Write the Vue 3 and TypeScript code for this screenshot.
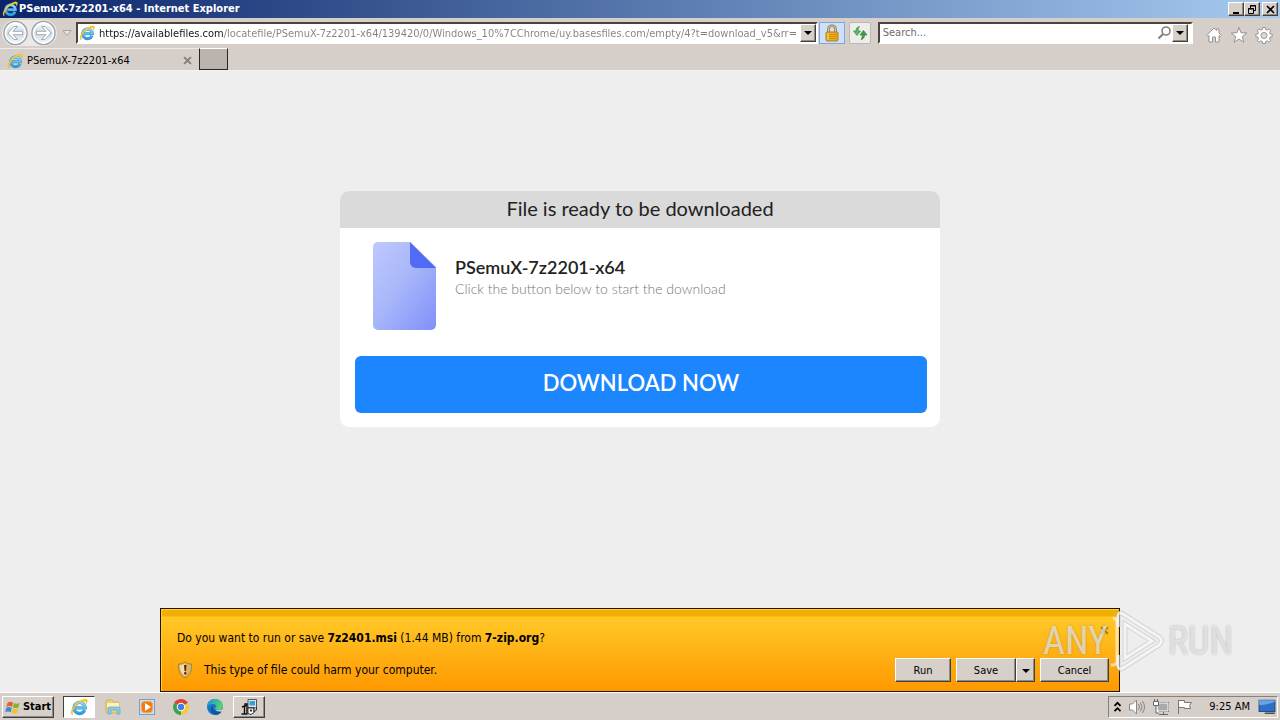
<script setup lang="ts">
import { ref } from 'vue'

const address = ref('https://availablefiles.com/locatefile/PSemuX-7z2201-x64/139420/0/Windows_10%7CChrome/uy.basesfiles.com/empty/4?t=download_v5&rr=1079')
const search = ref('')
const fileName = 'PSemuX-7z2201-x64'
</script>

<template>
  <svg class="defs" aria-hidden="true">
    <defs>
      <linearGradient id="ie-blue" x1="0" y1="0" x2="0" y2="1">
        <stop offset="0" stop-color="#8fdcfa" /><stop offset="1" stop-color="#2f9be0" />
      </linearGradient>
      <linearGradient id="nav-fill" x1="0" y1="0" x2="0" y2="1">
        <stop offset="0" stop-color="#fff" /><stop offset="0.5" stop-color="#cdd9e2" /><stop offset="1" stop-color="#f4fbff" />
      </linearGradient>
      <linearGradient id="file-fill" x1="0" y1="0" x2="1" y2="1">
        <stop offset="0" stop-color="#bfc9ff" /><stop offset="0.45" stop-color="#a9b7fa" /><stop offset="1" stop-color="#8090f8" />
      </linearGradient>
      <linearGradient id="edge-fill" x1="0" y1="0" x2="1" y2="0.4">
        <stop offset="0" stop-color="#1a8fe0" /><stop offset="1" stop-color="#58d66c" />
      </linearGradient>
      <symbol id="ie" viewBox="0 0 16 16">
        <path d="M13 10.800A4.900 4.900 0 1 1 13.400 8.700H5.500" fill="none" stroke="#3a8cc8" stroke-width="2.900" />
        <path d="M13 10.800A4.900 4.900 0 1 1 13.400 8.700H5.500" fill="none" stroke="url(#ie-blue)" stroke-width="2.100" />
        <path d="M2.400 15.100C-.6 14.200 1.400 8.800 5.600 5.100 9.300 1.600 14.400-.3 15.300 1.600c.5 1-.1 2.500-.9 3.700C14.700 3.200 13.800 2.200 11 3.200 7.500 4.400 3.800 8.300 2.700 11.100c-.8 2-.6 3.100-.3 4z" fill="#f7cf2e" stroke="#d9a71c" stroke-width=".3" />
      </symbol>
    </defs>
  </svg>

  <div class="desktop">
    <header class="titlebar">
      <svg class="i16"><use href="#ie" /></svg>
      <h1>{{ fileName }} - Internet Explorer</h1>
      <div class="window-buttons">
        <button class="bevel" aria-label="Minimize"><svg viewBox="0 0 13 11"><path d="M3 8h6v2H3z" /></svg></button>
        <button class="bevel" aria-label="Restore"><svg viewBox="0 0 13 11"><path d="M4.500 4V1.500h5v5H8M4 2h6M2.500 4.500h5v5h-5zM2 5h6" fill="none" stroke="#000" /></svg></button>
        <button class="bevel close" aria-label="Close"><svg viewBox="0 0 13 11"><path d="M3 2l7 7M10 2L3 9" fill="none" stroke="#000" stroke-width="1.700" /></svg></button>
      </div>
    </header>

    <nav class="toolbar">
      <div class="history">
        <button aria-label="Back">
          <svg viewBox="0 0 26 26"><circle cx="13" cy="13" r="11.500" fill="url(#nav-fill)" stroke="#9ba3ab" stroke-width="1.500" /><circle cx="13" cy="13" r="10" fill="none" stroke="#fff" stroke-width="1.500" /><path d="M5.500 13l6-6.500h3.500l-4.500 4.800h9.500v3.400h-9.500l4.500 4.800h-3.500z" fill="#fff" stroke="#98a5b0" stroke-width=".9" /></svg>
        </button>
        <button aria-label="Forward">
          <svg viewBox="0 0 26 26"><circle cx="13" cy="13" r="11.500" fill="url(#nav-fill)" stroke="#9ba3ab" stroke-width="1.500" /><circle cx="13" cy="13" r="10" fill="none" stroke="#fff" stroke-width="1.500" /><path d="M20.500 13l-6-6.500H11l4.500 4.800H6v3.400h9.500L11 19.500h3.500z" fill="#fff" stroke="#98a5b0" stroke-width=".9" /></svg>
        </button>
      </div>
      <button class="recent" aria-label="Recent pages"><svg viewBox="0 0 10 8"><path d="M1 1.500h8L5 6.500z" fill="#e7e3e0" stroke="#aaa5a1" /></svg></button>
      <div class="field address">
        <svg class="i16"><use href="#ie" /></svg>
        <input v-model="address" class="url" aria-label="Address" spellcheck="false" />
        <button class="bevel drop" aria-label="Show address history"><svg viewBox="0 0 8 4"><path d="M0 0h8L4 4z" /></svg></button>
      </div>
      <button class="security" aria-label="Security report">
        <svg viewBox="0 0 16 18"><path d="M4.500 9V5.200a3.500 3.500 0 0 1 7 0V9" fill="none" stroke="#8c7339" stroke-width="2.600" /><path d="M4.500 9V5.200a3.500 3.500 0 0 1 7 0V9" fill="none" stroke="#e8d9a6" stroke-width="1" /><rect x="2" y="8" width="12" height="9" rx="1" fill="#e9ac20" stroke="#b37c13" /><path d="M3 10.500h10M3 12.500h10M3 14.500h10" stroke="#c88c15" stroke-width=".8" /><path d="M4 9v7" stroke="#ffe07b" /></svg>
      </button>
      <button class="refresh" aria-label="Refresh">
        <svg viewBox="0 0 16 16"><path d="M7.500 1.500C5 2 4 3.500 4 6H1.500L5 10.500 8.500 6H6.200C6.200 4 6.500 2.700 7.500 1.500z" fill="#5cb865" stroke="#24883a" stroke-width=".6" /><path d="M9 14.500c2.500-.5 3.500-2 3.500-4.500H15l-3.500-4.500L8 10h2.300c0 2-.3 3.300-1.300 4.500z" fill="#3fa04c" stroke="#1f6f2b" stroke-width=".6" /></svg>
      </button>
      <div class="field search">
        <input v-model="search" type="search" placeholder="Search..." aria-label="Search" />
        <svg class="i16" viewBox="0 0 16 16"><circle cx="10" cy="6" r="4" fill="none" stroke="#85807f" stroke-width="1.600" /><path d="M7 9l-4.500 4.500" stroke="#85807f" stroke-width="2.200" /></svg>
        <button class="bevel drop" aria-label="Search providers"><svg viewBox="0 0 8 4"><path d="M0 0h8L4 4z" /></svg></button>
      </div>
      <div class="tools">
        <button aria-label="Home"><svg viewBox="0 0 18 18"><path d="M1.500 9.500L9 2l2.500 2.500V3H14v4l2.500 2.500-1 1L14 9.500V16h-3.500v-5h-3v5H4V9.500l-1.500 1z" fill="#fff" stroke="#969290" /></svg></button>
        <button aria-label="Favorites"><svg viewBox="0 0 18 18"><path d="M9 1.500l2 5.200 5.700.3-4.400 3.600 1.500 5.600L9 13l-4.800 3.200 1.500-5.600L1.300 7 7 6.700z" fill="#fff" stroke="#969290" /></svg></button>
        <button aria-label="Tools"><svg viewBox="0 0 18 18"><path d="M7.700 1.500h2.600l.4 2 1.400.6 1.800-1.200 1.800 1.800-1.200 1.800.6 1.300 2 .4v2.600l-2 .4-.6 1.400 1.200 1.700-1.800 1.800-1.800-1.200-1.400.6-.4 2H7.700l-.4-2-1.400-.6-1.800 1.200-1.800-1.800 1.200-1.700-.6-1.400-2-.4V8.200l2-.4.6-1.300-1.200-1.800 1.800-1.800 1.800 1.200 1.400-.6z" fill="#fff" stroke="#969290" /><circle cx="9" cy="9.500" r="3" fill="#dedbd8" stroke="#969290" /></svg></button>
      </div>
    </nav>

    <div class="tabs">
      <div class="tab">
        <svg class="i16"><use href="#ie" /></svg>
        <span>{{ fileName }}</span>
        <button aria-label="Close tab"><svg viewBox="0 0 8 8"><path d="M1 1l6 6M7 1L1 7" stroke="#85807f" stroke-width="1.800" /></svg></button>
      </div>
      <button class="new-tab" aria-label="New tab"></button>
    </div>

    <main class="page">
      <section class="card">
        <h2>File is ready to be downloaded</h2>
        <div class="file">
          <svg class="file-icon" viewBox="0 0 63 88"><path d="M5 0h32l26 25v58a5 5 0 0 1-5 5H5a5 5 0 0 1-5-5V5a5 5 0 0 1 5-5z" fill="url(#file-fill)" /><path d="M37 0l26 26H43a6 6 0 0 1-6-6z" fill="#526bf5" /></svg>
          <div class="file-text">
            <h3>{{ fileName }}</h3>
            <p>Click the button below to start the download</p>
          </div>
        </div>
        <button class="download">DOWNLOAD NOW</button>
      </section>

      <div class="watermark">
        <span>ANY</span>
        <svg viewBox="0 0 56 64"><path d="M8 18V7.500Q8 2 13 5l36 23q5 4 0 8L13 59q-5 3-5-3V46M15 15v34l27-17z" fill="none" stroke="#aaa" stroke-opacity=".4" stroke-width="5" /><path d="M8 18V7.500Q8 2 13 5l36 23q5 4 0 8L13 59q-5 3-5-3V46M15 15v34l27-17z" fill="none" stroke="#fff" stroke-opacity=".75" stroke-width="3" /><path d="M1 56h2q4 0 4-5V14q0-5-4-5" fill="none" stroke="#fff" stroke-opacity=".6" stroke-width="3" /></svg>
        <span>RUN</span>
      </div>

      <aside class="notice" role="alertdialog" aria-label="File download">
        <button class="dismiss" aria-label="Dismiss"><svg viewBox="0 0 8 8"><path d="M1 1l6 6M7 1L1 7" stroke="#9a7020" stroke-width="1.600" /></svg></button>
        <p class="question">Do you want to run or save <b>7z2401.msi</b> (1.44 MB) from <b>7-zip.org</b>?</p>
        <div class="notice-row">
          <svg class="shield" viewBox="0 0 16 18"><path d="M8 1c2 1.500 4 2 6.500 2 .5 6-1 11-6.500 14C2.500 14 1 9 1.500 3 4 3 6 2.500 8 1z" fill="#d7b65e" stroke="#a18345" /><path d="M8 2.500C6.500 3.700 4.500 4.300 3 4.300c0 4 .8 7.500 5 10.700z" fill="#f0dfa5" /><path d="M7 4h2.500L9 10H7.500z" fill="#6b2008" /><circle cx="8.200" cy="12.300" r="1.200" fill="#6b2008" /></svg>
          <p>This type of file could harm your computer.</p>
          <div class="actions">
            <button class="bevel">Run</button>
            <div class="split">
              <button class="bevel">Save</button>
              <button class="bevel more" aria-label="Save options"><svg viewBox="0 0 8 4"><path d="M0 0h8L4 4z" /></svg></button>
            </div>
            <button class="bevel cancel">Cancel</button>
          </div>
        </div>
      </aside>
    </main>

    <footer class="taskbar">
      <button class="bevel start">
        <svg viewBox="0 0 18 16"><path d="M3 3q3-2 6 0L8 8Q5 6 1.500 8z" fill="#e8602c" /><path d="M10 3.500q3 1.500 6.500 0L15 8.500q-3 1.500-6 0z" fill="#7fb43c" /><path d="M1.300 9q3-2 6.300 0l-1.200 5Q3.500 12 .2 14z" fill="#3d8bd4" /><path d="M8.700 9.500q3 1.500 6.300 0l-1.500 5q-3 1.500-6 0z" fill="#f7bd2f" /></svg>
        Start
      </button>
      <div class="apps">
        <button class="active" aria-label="Internet Explorer"><svg viewBox="0 0 16 16"><use href="#ie" /></svg></button>
        <button aria-label="File Explorer"><svg viewBox="0 0 18 18"><path d="M2 4l1-2h5l1 2h6v11H2z" fill="#edcf77" stroke="#c9a954" stroke-width=".7" /><path d="M3 5h12v4H3z" fill="#fff2b5" /><path d="M4 16V11q0-2 2-2h8q2 0 2 2v5h-3v-4H7v4z" fill="#8bc8e8" stroke="#69a7c9" stroke-width=".7" /></svg></button>
        <button aria-label="Media Player"><svg viewBox="0 0 18 18"><rect x="1.500" y="1.500" width="15" height="15" fill="#c9dff3" stroke="#7a9ec4" /><rect x="3.500" y="3.500" width="11" height="11" rx="3" fill="#ef7b12" stroke="#f8a54a" /><path d="M7 5l6 4-6 4z" fill="#fff" /></svg></button>
        <button aria-label="Chrome"><svg viewBox="0 0 18 18"><path d="M9 9L2.100 5A8 8 0 0 1 15.900 5z" fill="#df4232" /><path d="M9 9l6.900-4A8 8 0 0 1 9 17z" fill="#f8c93a" /><path d="M9 9v8A8 8 0 0 1 2.100 5z" fill="#3ba34e" /><circle cx="9" cy="9" r="4.200" fill="#fff" /><circle cx="9" cy="9" r="3.200" fill="#3f7fe6" /></svg></button>
        <button aria-label="Edge"><svg viewBox="0 0 18 18"><circle cx="9" cy="9" r="8" fill="#1578c8" /><path d="M1 9C1 4 4.500 1 9 1c5 0 8 3.500 8 7 0 2.500-2 4-4.500 4-2 0-3-.8-2.500-1.700.8-1.600.3-4-2.500-4.300C4.500 5.700 2 7 1 9z" fill="url(#edge-fill)" /><path d="M7.500 7.500C5.800 11 8 14.500 15.500 13.700 13 17.500 8 18 5.500 14.500 4 12 5 8.500 7.500 7.500z" fill="#10549e" /><path d="M9.500 9c-1.500 2 1 4.200 6.500 2.600L18 10v4l-2.500-.5q-6 .5-6-3z" fill="#d6cec8" /></svg></button>
        <button class="bevel" aria-label="Windows Installer"><svg viewBox="0 0 18 18"><path d="M8 1.500h8.500v8H8z" fill="#e4e4e0" stroke="#333" stroke-width=".8" /><path d="M9.500 3h5.500v4.500H9.500z" fill="#2ea3e6" /><path d="M5 6h2v2H5zM2 9l2.500-1v8M1.500 16h6M7 9v7" fill="none" stroke="#111" stroke-width="1.400" /><path d="M8 10h6v4.500l-3 2-3-1z" fill="#fff" stroke="#222" stroke-width=".9" /><path d="M14 10v4l2.500-2V9" fill="#b8b8b4" stroke="#222" stroke-width=".9" /><circle cx="11" cy="12.500" r="1.200" fill="#444" /></svg></button>
      </div>
      <div class="tray">
        <button aria-label="Show hidden icons"><svg class="chev" viewBox="0 0 7 10"><path d="M1 4l2.500-2.500L6 4M1 8.500L3.500 6 6 8.500" fill="none" stroke="#000" stroke-width="1.500" /></svg></button>
        <button aria-label="Volume"><svg viewBox="0 0 18 18"><path d="M1.500 6h3l4-4v14l-4-4h-3z" fill="#fff" stroke="#888" /><path d="M10.500 6q2 3 0 6M12.500 4.500q3 4.500 0 9M14.500 3q4 6 0 12" fill="none" stroke="#888" /></svg></button>
        <button aria-label="Network"><svg viewBox="0 0 18 18"><path d="M6.500 4.500h10v9h-10zM7 16.500h9M11.500 14v2" fill="#aaa" stroke="#666" /><path d="M6 5h10v8H6z" fill="none" stroke="#fff" /><path d="M1.500 3.500h5v4h-5zM2.500 1v2M5.500 1v2M4 8v7h3" fill="#fff" stroke="#666" /></svg></button>
        <button aria-label="Action Center"><svg viewBox="0 0 18 18"><path d="M2.500 2v14M2.500 2.500h6v2h7l-2 3 1 3h-6v-1h-6" fill="#fff" stroke="#777" /></svg></button>
        <time>9:25 AM</time>
        <button aria-label="Show desktop"><svg viewBox="0 0 16 14"><path d="M1 1h14v10H1z" fill="#2f6fc4" stroke="#214f8d" /><path d="M1 5q7 1 14-3V1H1z" fill="#66a5e4" /><path d="M6 12h9v1H6z" fill="#222" /></svg></button>
      </div>
    </footer>
  </div>
</template>

<style>
html, body { margin: 0; background: #eee; }
</style>

<style scoped>
* { box-sizing: border-box; }
h1, h2, h3, p { margin: 0; font-weight: 400; }
button { display: flex; align-items: center; justify-content: center; padding: 0; border: 0; background: none; color: #000; font: inherit; }
input { min-width: 0; padding: 0; border: 0; outline: 0; background: none; font: inherit; }
svg { flex: none; }
.defs { position: absolute; width: 0; height: 0; }
.i16 { width: 16px; height: 16px; }
.desktop { display: flex; flex-direction: column; min-height: 100vh; background: #eee; color: #000; font: 11px/16px "DejaVu Sans Condensed", "DejaVu Sans", sans-serif; }
.bevel { border: 1px solid; border-color: #fff #404040 #404040 #fff; background: #d6d0c9; box-shadow: inset -1px -1px #918b86; }

.titlebar { display: flex; align-items: center; gap: 1px; height: 18px; padding: 0 2px; background: linear-gradient(90deg, #0a246a, #a6caf0); color: #fff; }
.titlebar h1 { flex: 1; font-size: 11px; line-height: 18px; font-weight: 700; white-space: nowrap; }
.window-buttons { display: flex; }
.window-buttons button { width: 16px; height: 14px; }
.window-buttons svg { width: 13px; height: 11px; }
.window-buttons .close { margin-left: 2px; }

.toolbar { display: flex; align-items: center; height: 30px; padding: 0 7px 0 2px; background: #d6cec8; }
.history { display: flex; gap: 1px; border-radius: 13px; background: #ebe8e6; }
.history button, .history svg { width: 27px; height: 26px; }
.recent { width: 19px; height: 20px; }
.recent svg { width: 10px; height: 8px; }
.field { display: flex; align-items: center; height: 22px; border: 2px solid; border-color: #4b4340 #fff #fff #4b4340; background: #fff; }
.address { flex: 736; gap: 4px; padding-left: 1px; }
.url { flex: 1; height: 18px; background: linear-gradient(90deg, #151515 125px, #858080 125px); background-clip: text; -webkit-background-clip: text; color: transparent; }
.drop { width: 16px; height: 18px; }
.drop svg, .more svg { width: 8px; height: 4px; }
.security { width: 26px; height: 22px; margin: 0 4px 0 1px; border: 1px solid #78a9e0; background: #cfe1fa; }
.security svg { width: 16px; height: 18px; }
.refresh { width: 22px; height: 22px; margin-right: 7px; border: 1px solid #bdb8b4; border-radius: 2px; background: #efedec; }
.refresh svg { width: 16px; height: 16px; }
.search { flex: 305; padding: 0 3px; }
.search input { flex: 1; appearance: none; }
.search input::placeholder { color: #6d6d6d; opacity: 1; }
.tools { display: flex; gap: 7px; margin-left: 12px; padding-top: 3px; }
.tools svg { width: 18px; height: 18px; }

.tabs { display: flex; height: 23px; border-bottom: 1px solid #f5f3f2; background: #d6cec8; }
.tab { display: flex; align-items: center; gap: 4px; width: 199px; padding: 2px 7px 0 7px; border-top: 1px solid #eeeae7; }
.tab span { flex: 1; }
.tab button, .tab button svg { width: 9px; height: 9px; }
.new-tab { width: 29px; height: 22px; border: 1px solid; border-color: #fff #292525 #292525 #292525; background: #bdb3ad; }

.page { position: relative; flex: 1; display: flex; flex-direction: column; align-items: center; justify-content: space-between; padding-top: 120px; }
.card { width: 600px; max-width: 100%; overflow: hidden; border-radius: 9px; background: #fff; color: #222; font-family: Lato, Inter, sans-serif; }
.card h2 { padding: 3px 0 5px; background: #dadada; font-size: 20px; line-height: 29px; font-weight: 400; text-align: center; }
.file { display: flex; gap: 19px; padding: 14px 33px 26px; }
.file-icon { width: 63px; height: 88px; }
.file-text { padding-top: 13px; }
.file h3 { font-size: 18px; line-height: 24px; font-weight: 600; }
.file p { color: #777; font-size: 14px; line-height: 20px; font-weight: 300; }
.download { width: calc(100% - 28px); height: 57px; margin: 0 13px 14px 15px; padding-bottom: 3px; border-radius: 6px; background: #1c86ff; color: #fff; font-size: 22px; font-weight: 600; }

.notice { display: grid; grid-template-columns: 1fr auto; row-gap: 12px; width: 75%; padding: 17px 10px 9px 16px; border: 1px solid #211500; background: linear-gradient(#f3ae00 0 7px, #ffc927 8px, #ff9800); font-size: 12px; box-shadow: inset 1px 1px #ffcf39; }
.question { grid-row: 1; grid-column: 1; padding-top: 4px; }
.dismiss { grid-row: 1; grid-column: 2; align-self: start; }
.dismiss svg { width: 9px; height: 9px; }
.notice-row { grid-column: 1 / 3; display: flex; align-items: center; }
.shield { width: 16px; height: 18px; margin-right: 11px; }
.actions { position: relative; z-index: 2; display: flex; gap: 5px; margin-left: auto; font-size: 11px; }
.actions button { width: 56px; height: 24px; padding-top: 1px; }
.split { display: flex; }
.split button { width: 60px; }
.split .more { width: 19px; }
.actions .cancel { width: 69px; }
.watermark { position: absolute; z-index: 1; right: 47px; bottom: 19px; display: flex; align-items: center; gap: 2px; color: rgb(255 255 255 / 60%); font: 38px/64px "Liberation Sans Narrow", "Roboto Condensed", Roboto, sans-serif; text-shadow: 0 0 2px rgb(100 100 100 / 50%); pointer-events: none; }
.watermark svg { width: 56px; height: 64px; }

.taskbar { display: flex; align-items: center; height: 28px; padding: 1px 2px 0; border-top: 1px solid #fff; background: #d6cec8; }
.start { gap: 2px; width: 52px; height: 22px; font-weight: 700; font-size: 11px; }
.start svg { width: 16px; height: 16px; }
.apps { display: flex; gap: 2px; margin-left: 9px; }
.apps button { width: 32px; height: 22px; }
.apps svg { width: 18px; height: 18px; }
.apps .active { border: 1px solid; border-color: #404040 #fff #fff #404040; background: #fff; }
.tray { display: flex; align-items: center; gap: 6px; height: 22px; margin-left: auto; padding: 0 1px 0 4px; border: 1px solid; border-color: #87817d #fff #fff #87817d; }
.tray svg { width: 18px; height: 18px; }
.tray .chev { width: 9px; height: 12px; }
.tray time { margin: 0 2px 0 9px; }
</style>
